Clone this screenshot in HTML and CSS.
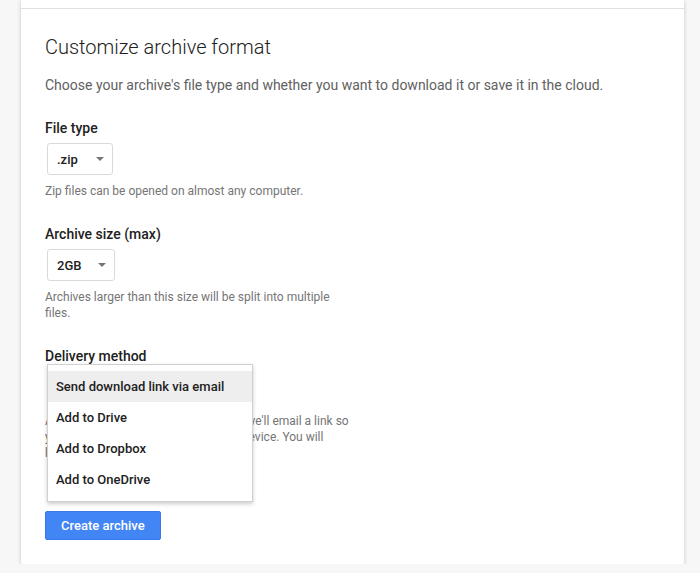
FILE: index.html
```html
<!DOCTYPE html>
<html lang="en">
<head>
    <meta charset="UTF-8">
    <meta name="viewport" content="width=device-width, initial-scale=1.0">
    <title>Customize archive format</title>
    <link rel="stylesheet" href="styles.css">
</head>
<body>
    <div class="card">
        <div class="card-top"></div>

        <div class="card-body">
            <h1>Customize archive format</h1>
            <p class="intro">Choose your archive's file type and whether you want to download it or save it in the cloud.</p>

            <div class="field">
                <div class="label">File type</div>
                <div class="select select-zip">.zip<span class="caret"></span></div>
                <div class="hint">Zip files can be opened on almost any computer.</div>
            </div>

            <div class="field">
                <div class="label">Archive size (max)</div>
                <div class="select select-size">2GB<span class="caret"></span></div>
                <div class="hint">Archives larger than this size will be split into multiple files.</div>
            </div>

            <div class="field">
                <div class="label">Delivery method</div>
                <div class="select-wrap">
                    <div class="select select-delivery">Send download link via email<span class="caret"></span></div>
                    <ul class="menu">
                        <li class="menu-item selected">Send download link via email</li>
                        <li class="menu-item">Add to Drive</li>
                        <li class="menu-item">Add to Dropbox</li>
                        <li class="menu-item">Add to OneDrive</li>
                    </ul>
                </div>
                <div class="hint hint-lines">As soon as your archives are created, we'll email a link so<br>you can download the zip file to your device. You will<br>have one week to download it.</div>
            </div>

            <button class="btn-primary">Create archive</button>
        </div>
    </div>
</body>
</html>
```

FILE: styles.css
```css
body {
    margin: 0;
    background-color: #f7f7f7;
    font-family: Roboto, "Liberation Sans", Arial, sans-serif;
    color: #212121;
}
.card {
    margin: 0 16px 0 21px;
    background-color: #fff;
    border-radius: 0 0 2px 2px;
    box-shadow: 0 1px 4px rgba(0, 0, 0, 0.2);
}
.card-top {
    height: 8px;
    border-bottom: 1px solid #e0e0e0;
}
.card-body {
    padding: 24px 24px 24px;
}
h1 {
    margin: 0 0 14px;
    font-size: 20px;
    line-height: 28px;
    font-weight: 300;
    color: #212121;
}
.intro {
    margin: 0 0 23px;
    font-size: 14px;
    line-height: 20px;
    color: #616161;
}
.field {
    margin-bottom: 25px;
}
.label {
    margin-bottom: 5px;
    font-size: 14px;
    line-height: 20px;
    font-weight: 500;
    color: #212121;
}
.select {
    position: relative;
    display: flex;
    align-items: center;
    box-sizing: border-box;
    height: 32px;
    margin-left: 2px;
    padding-left: 9px;
    border: 1px solid #dadada;
    border-radius: 3px;
    font-size: 13px;
    font-weight: 500;
    color: #212121;
}
.select-zip {
    width: 66px;
}
.select-size {
    width: 68px;
}
.select-delivery {
    width: 206px;
}
.caret {
    position: absolute;
    right: 8px;
    top: 13px;
    width: 0;
    height: 0;
    border-left: 4px solid transparent;
    border-right: 4px solid transparent;
    border-top: 4px solid #757575;
}
.select-wrap {
    position: relative;
}
.menu {
    position: absolute;
    top: -7px;
    left: 2px;
    width: 206px;
    margin: 0;
    padding: 6px 0;
    list-style: none;
    box-sizing: border-box;
    background-color: #fff;
    border: 1px solid #d0d0d0;
    box-shadow: 0 2px 4px rgba(0, 0, 0, 0.2);
    z-index: 2;
}
.menu-item {
    height: 31px;
    line-height: 31px;
    padding: 0 8px;
    font-size: 13px;
    font-weight: 500;
    color: #212121;
    white-space: nowrap;
}
.menu-item.selected {
    background-color: #eeeeee;
}
.hint {
    max-width: 300px;
    margin-top: 8px;
    font-size: 12px;
    line-height: 16px;
    color: #757575;
}
.hint-lines {
    max-width: none;
    margin-top: 10px;
    white-space: nowrap;
}
.btn-primary {
    display: block;
    height: 29px;
    margin-top: 50px;
    padding: 0 15px;
    border: 1px solid #3b78e7;
    border-radius: 2px;
    background-color: #4285f4;
    color: #fff;
    font-family: inherit;
    font-size: 13px;
    font-weight: 500;
}
```
